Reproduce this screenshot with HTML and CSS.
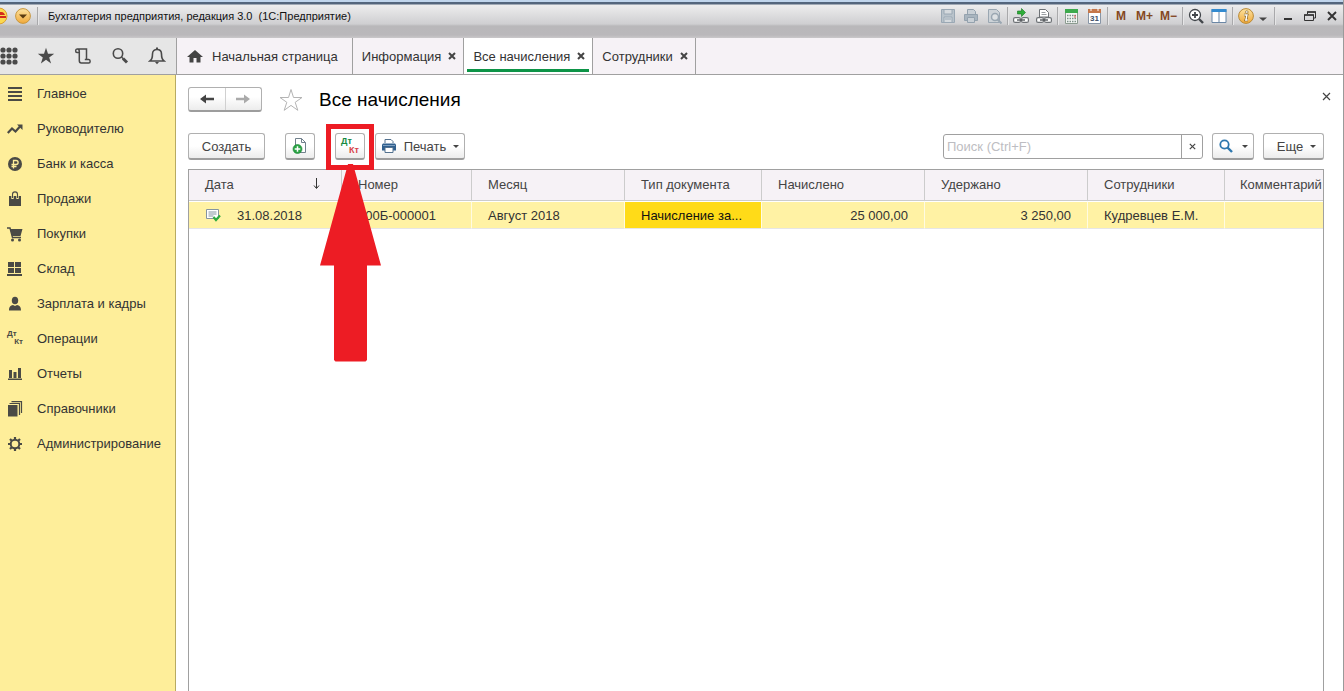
FILE: index.html
```html
<!DOCTYPE html>
<html lang="ru">
<head>
<meta charset="utf-8">
<title>Бухгалтерия предприятия, редакция 3.0</title>
<link rel="stylesheet" href="styles.css">
</head>
<body>
<div class="app">
  <header class="titlebar">
    <div class="titlebar-row">
      <svg class="logo" width="8" height="18" viewBox="0 0 8 18"><circle cx="-1" cy="9" r="8" fill="#fbd950" stroke="#d9a035"/><path d="M0 5h1.500c2 0 3 1.500 3.500 3H0z" fill="#d42a1c"/><path d="M0 10h6" stroke="#d42a1c" stroke-width="2"/></svg>
      <button class="plain menu-round" aria-label="Меню"><svg width="16" height="16" viewBox="0 0 16 16"><defs><linearGradient id="gold" x2="0" y2="1"><stop stop-color="#fde3a0"/><stop offset="1" stop-color="#f0a93a"/></linearGradient></defs><circle cx="8" cy="8" r="7.4" fill="url(#gold)" stroke="#c8973f"/><path d="M4 6.5h8L8 10.5z" fill="#5b3c10"/></svg></button>
      <i class="vline"></i>
      <span class="window-title">Бухгалтерия предприятия, редакция 3.0&nbsp; (1С:Предприятие)</span>
      <div class="tools">
        <button class="plain" aria-label="Сохранить"><svg width="16" height="16" viewBox="0 0 16 16" fill="none" stroke="#9aa8b4"><path d="M1.500 1.500h13v13h-13z" fill="#b9c3cb"/><path d="M4 2v4h8V2M4 14V9h8v5M5 11h6" fill="#d5dade"/></svg></button>
        <button class="plain" aria-label="Печать документа"><svg width="16" height="16" viewBox="0 0 16 16" fill="#c9d0d6" stroke="#94a2ae"><path d="M4.500 1.500h6l2 2v4h-8z"/><path d="M1.500 6.500h13v6h-13z" fill="#a9b5bf"/><path d="M4.500 9.500h7v5h-7z"/></svg></button>
        <button class="plain" aria-label="Просмотр"><svg width="16" height="16" viewBox="0 0 16 16" fill="none" stroke="#9aa7b2"><path d="M2.500 1.500h8l3 3v10h-11z" fill="#cdd3d8"/><circle cx="9" cy="9" r="3.500" fill="#dde1e4" stroke-width="1.500"/><path d="M11.500 11.500l4 4" stroke-width="2"/></svg></button>
        <i class="vline"></i>
        <button class="plain" aria-label="Перейти по ссылке"><svg width="16" height="16" viewBox="0 0 16 16"><path d="M4.500 3h4V.5l4 4-4 4V6h-4z" fill="#2fae3a" stroke="#16761f" stroke-width=".6"/><rect x=".6" y="9.600" width="6.800" height="4.800" rx="1.500" fill="#fff" stroke="#6e7276" stroke-width="1.200"/><rect x="8.600" y="9.600" width="6.800" height="4.800" rx="1.500" fill="#fff" stroke="#6e7276" stroke-width="1.200"/><path d="M4 12h8" stroke="#55595d" stroke-width="1.400"/></svg></button>
        <button class="plain" aria-label="Получить ссылку"><svg width="16" height="16" viewBox="0 0 16 16"><path d="M3.500 9V1.500h6l3 3V9z" fill="#fff" stroke="#6e7276"/><path d="M5.500 4.500h4M5.500 6.500h5" stroke="#9a9ea2"/><rect x=".6" y="9.600" width="6.800" height="4.800" rx="1.500" fill="#fff" stroke="#6e7276" stroke-width="1.200"/><rect x="8.600" y="9.600" width="6.800" height="4.800" rx="1.500" fill="#fff" stroke="#6e7276" stroke-width="1.200"/><path d="M4 12h8" stroke="#55595d" stroke-width="1.400"/></svg></button>
        <i class="vline"></i>
        <button class="plain" aria-label="Калькулятор"><svg width="16" height="16" viewBox="0 0 16 16"><path d="M2.500 1.500h12v14h-12z" fill="#f4f6f4" stroke="#8b9b8f"/><path d="M2 1h13v4H2z" fill="#3daa4d"/><path d="M4 7.500h9M4 10.500h9M4 13.500h9" stroke="#7c9088" stroke-width="1.500" stroke-dasharray="1.500 1"/><path d="M12 7v3" stroke="#d55"/></svg></button>
        <button class="plain cal" aria-label="Календарь"><svg width="16" height="16" viewBox="0 0 16 16"><path d="M2.500 1.500h12v14h-12z" fill="#fff" stroke="#8795a6"/><path d="M2 1h13v4H2z" fill="#c5774a"/><path d="M5 0v3M12 0v3" stroke="#fff"/><text x="8.500" y="13" text-anchor="middle" class="cal-day">31</text></svg></button>
        <i class="vline"></i>
        <button class="plain mem mem-one">M</button>
        <button class="plain mem">M+</button>
        <button class="plain mem">M−</button>
        <i class="vline"></i>
        <button class="plain" aria-label="Масштаб"><svg width="16" height="16" viewBox="0 0 16 16" fill="none" stroke="#42464b"><circle cx="7" cy="7" r="5.500" fill="#fff" stroke-width="1.300"/><path d="M4 7h6M7 4v6" stroke-width="1.800"/><path d="M11 11l4 4" stroke-width="2.400"/></svg></button>
        <button class="plain" aria-label="Панели"><svg width="16" height="16" viewBox="0 0 16 16"><path d="M1 1.500h14v13H1z" fill="#fff" stroke="#6b87a5"/><path d="M.5 1h15v3H.5z" fill="#338bd0"/><path d="M8 4v11" stroke="#6b87a5"/></svg></button>
        <i class="vline"></i>
        <button class="plain" aria-label="Справка"><svg width="16" height="16" viewBox="0 0 16 16"><circle cx="8" cy="8" r="7.400" fill="url(#gold)" stroke="#b98a38"/><circle cx="8.800" cy="4" r="1.300" fill="#fff" stroke="#7a5a20" stroke-width=".6"/><path d="M6 7h3l-1.200 5H10" fill="none" stroke="#7a5a20" stroke-width="2.600"/><path d="M6.300 7H9l-1.200 5h1.900" fill="none" stroke="#fff" stroke-width="1.400"/></svg></button>
        <button class="plain drop" aria-label="Ещё"><svg width="8" height="16" viewBox="0 0 8 16"><path d="M0 9.500h8L4 13z" fill="#444"/></svg></button>
        <i class="vline"></i>
        <button class="plain win" aria-label="Свернуть"><svg width="12" height="16" viewBox="0 0 12 16"><path d="M2 11h8" stroke="#333" stroke-width="2"/></svg></button>
        <button class="plain win" aria-label="Восстановить"><svg width="12" height="16" viewBox="0 0 12 16" fill="none" stroke="#333"><path d="M3.500 6V4h8v6h-2"/><path d="M.5 7h9v5.500h-9z"/><path d="M3 4h9M0 7h10" stroke-width="1.600"/></svg></button>
        <button class="plain win" aria-label="Закрыть окно"><svg width="12" height="16" viewBox="0 0 12 16"><path d="M2 4l8 8M10 4l-8 8" stroke="#333" stroke-width="1.900"/></svg></button>
      </div>
    </div>
  </header>

  <div class="topbar">
    <div class="quick">
      <button class="plain q-grid" aria-label="Разделы"><svg width="18" height="18" viewBox="0 0 18 18" fill="#4a4a4a"><circle cx="3" cy="3" r="2.600"/><circle cx="9" cy="3" r="2.600"/><circle cx="15" cy="3" r="2.600"/><circle cx="3" cy="9" r="2.600"/><circle cx="9" cy="9" r="2.600"/><circle cx="15" cy="9" r="2.600"/><circle cx="3" cy="15" r="2.600"/><circle cx="9" cy="15" r="2.600"/><circle cx="15" cy="15" r="2.600"/></svg></button>
      <button class="plain" aria-label="Избранное"><svg width="18" height="18" viewBox="0 0 18 18"><path d="M9 .8l2 6h6.200l-5 3.700 1.900 6L9 12.800l-5.100 3.700 1.900-6-5-3.700H7z" fill="#4a4a4a"/></svg></button>
      <button class="plain" aria-label="История"><svg width="18" height="18" viewBox="0 0 18 18" fill="none" stroke="#4a4a4a" stroke-width="1.500"><path d="M5 5.500H3C1.200 5.500 1.200 2 3 2h9.500v10.500M3.500 2C5 2 5.300 3 5.300 4.500v9c0 1.700.6 2.500 2 2.500h7.500c1.800 0 1.800-3.500 0-3.500h-4"/></svg></button>
      <button class="plain" aria-label="Поиск"><svg width="18" height="18" viewBox="0 0 18 18" fill="none" stroke="#4a4a4a"><circle cx="7" cy="6.500" r="4.700" stroke-width="1.600"/><path d="M10.500 10l2 2" stroke-width="1.500"/><path d="M12 11.500l4 4" stroke-width="3"/></svg></button>
      <button class="plain" aria-label="Уведомления"><svg width="18" height="18" viewBox="0 0 18 18"><path d="M2 14c2-1.500 2.500-3 2.500-7 0-3 2-4.500 4.500-4.500S13.500 4 13.500 7c0 4 .5 5.500 2.500 7z" fill="none" stroke="#4a4a4a" stroke-width="1.600"/><path d="M9 .5v2" stroke="#4a4a4a" stroke-width="2"/><path d="M7 15h4l-2 2.300z" fill="#4a4a4a"/></svg></button>
    </div>
    <nav class="tabs">
      <a class="tab tab-home" href="#"><svg width="16" height="14" viewBox="0 0 16 14"><path d="M8 1L0 8h2.500v5.500h4V9h3v4.500h4V8H16z" fill="#444"/></svg>Начальная страница</a>
      <a class="tab" href="#">Информация<svg class="x" width="8" height="8" viewBox="0 0 8 8"><path d="M1 1l6 6M7 1L1 7"/></svg></a>
      <a class="tab tab-active" href="#">Все начисления<svg class="x" width="8" height="8" viewBox="0 0 8 8"><path d="M1 1l6 6M7 1L1 7"/></svg></a>
      <a class="tab" href="#">Сотрудники<svg class="x" width="8" height="8" viewBox="0 0 8 8"><path d="M1 1l6 6M7 1L1 7"/></svg></a>
    </nav>
  </div>

  <div class="body">
    <nav class="sidebar">
      <a href="#"><svg width="16" height="16" viewBox="0 0 16 16"><path d="M1 2h14M1 6h14M1 10h14M1 14h14" stroke="#4a4a45" stroke-width="1.800"/></svg>Главное</a>
      <a href="#"><svg width="16" height="16" viewBox="0 0 16 16"><path d="M.8 12L5 7.500l3.500 3L13 5.500" fill="none" stroke="#4a4a45" stroke-width="2.200"/><path d="M10 3.500h5.500V9z" fill="#4a4a45"/></svg>Руководителю</a>
      <a href="#"><svg width="16" height="16" viewBox="0 0 16 16"><circle cx="8" cy="8" r="7" fill="#4a4a45"/><path d="M6.500 12.500v-8H9c2.800 0 2.800 4 0 4H4.500M4.500 10.500h5" fill="none" stroke="#feee9a" stroke-width="1.300"/></svg>Банк и касса</a>
      <a href="#"><svg width="16" height="16" viewBox="0 0 16 16"><path d="M2 5h12v10H2z" fill="#4a4a45"/><path d="M5.500 8V3.500c0-3.500 5-3.500 5 0V8" fill="none" stroke="#feee9a" stroke-width="2.400"/><path d="M5.500 7V3.500c0-3.500 5-3.500 5 0V7" fill="none" stroke="#4a4a45" stroke-width="1.100"/></svg>Продажи</a>
      <a href="#"><svg width="16" height="16" viewBox="0 0 16 16"><path d="M0 2h3l2.500 9.500H14" fill="none" stroke="#4a4a45" stroke-width="1.400"/><path d="M3 3h12.500L13.500 10H5z" fill="#4a4a45"/><circle cx="5.500" cy="14" r="1.500" fill="#4a4a45"/><circle cx="12.500" cy="14" r="1.500" fill="#4a4a45"/></svg>Покупки</a>
      <a href="#"><svg width="16" height="16" viewBox="0 0 16 16" fill="#4a4a45"><path d="M1 1h6v5H1zM8 1h6v5H8zM1 7h6v5H1zM8 7h6v5H8zM0 13h15v2H0z"/></svg>Склад</a>
      <a href="#"><svg width="16" height="16" viewBox="0 0 16 16" fill="#4a4a45"><ellipse cx="8" cy="4.500" rx="3.200" ry="3.800"/><path d="M2 14.500c0-4 1.500-5 4-5.500l2 1 2-1c2.500.5 4 1.500 4 5.500z"/></svg>Зарплата и кадры</a>
      <a href="#"><span class="dtkt"><b>Дт</b><b class="kt">Кт</b></span>Операции</a>
      <a href="#"><svg width="16" height="16" viewBox="0 0 16 16" fill="#4a4a45"><path d="M2 4h3v8H2zM6.500 6h3v6h-3zM11 2h3v10h-3zM1 12.500h14V14H1z"/></svg>Отчеты</a>
      <a href="#"><svg width="16" height="16" viewBox="0 0 16 16"><path d="M1 4h9.500v11.500H1z" fill="#4a4a45"/><path d="M2.500 2.500h10V14M4.500.700h10V12" fill="none" stroke="#4a4a45" stroke-width="1.200"/></svg>Справочники</a>
      <a href="#"><svg width="16" height="16" viewBox="0 0 16 16" fill="none" stroke="#4a4a45"><circle cx="8" cy="8" r="4.300" stroke-width="2"/><path d="M8 1v2.500M8 12.500V15M1 8h2.500M12.500 8H15M3 3l2 2M11 11l2 2M13 3l-2 2M5 11l-2 2" stroke-width="2.200"/></svg>Администрирование</a>
    </nav>

    <main class="content">
      <div class="heading">
        <div class="nav-pair">
          <button aria-label="Назад"><svg width="14" height="10" viewBox="0 0 14 10"><path d="M0 5l6-4.500V3.800h8v2.400H6v3.300z" fill="#444"/></svg></button>
          <button aria-label="Вперед"><svg width="14" height="10" viewBox="0 0 14 10"><path d="M14 5L8 .5v3.300H0v2.400h8v3.300z" fill="#aaa"/></svg></button>
        </div>
        <button class="plain star" aria-label="В избранное"><svg width="24" height="24" viewBox="0 0 24 24"><path d="M12 1.500l2.500 8H23l-6.800 4.800 2.600 8L12 17.400l-6.800 4.900 2.600-8L1 9.500h8.500z" fill="#fff" stroke="#b4b4b4"/></svg></button>
        <h1>Все начисления</h1>
        <button class="plain close-page" aria-label="Закрыть"><svg width="9" height="9" viewBox="0 0 9 9"><path d="M1 1l7 7M8 1L1 8" stroke="#444" stroke-width="1.200"/></svg></button>
      </div>

      <div class="toolbar">
        <button class="btn create">Создать</button>
        <button class="btn square" aria-label="Создать копированием"><svg width="16" height="18" viewBox="0 0 16 18"><path d="M3.500 1.500h6l4 4v10h-10z" fill="#fff" stroke="#71808c"/><path d="M9.500 1.500v4h4" fill="none" stroke="#71808c"/><circle cx="5.500" cy="12" r="4.500" fill="#2ba345" stroke="#198532" stroke-width=".6"/><path d="M2.700 12h5.600M5.500 9.200v5.600" stroke="#fff" stroke-width="1.500"/></svg></button>
        <div class="marked">
          <button class="btn square" aria-label="Дт Кт"><span class="dtkt big"><b class="dt">Дт</b><b class="kt">Кт</b></span></button>
          <i class="frame"></i>
          <svg class="arrow" width="62" height="198" viewBox="0 0 62 198"><path d="M28 0h5l28 101.500H47V196l-1.500 1.500h-30L14 196v-94.500H0z" fill="#ed1c24"/></svg>
        </div>
        <button class="btn print"><svg width="16" height="16" viewBox="0 0 16 16"><path d="M4 5V1.500h6l2 2V5" fill="#fff" stroke="#53718e"/><path d="M2 5.500h12l1 1v6H1v-6z" fill="#2f5f8e"/><path d="M2 7.500h12" stroke="#7fa0c0"/><path d="M4 9.500h8v5H4z" fill="#fff" stroke="#53718e"/></svg>Печать<i class="caret"></i></button>
        <div class="search">
          <input type="text" placeholder="Поиск (Ctrl+F)" aria-label="Поиск">
          <button class="clear" aria-label="Очистить"><svg width="7" height="7" viewBox="0 0 7 7"><path d="M.8.800l5.400 5.400M6.200.800L.8 6.200" stroke="#444" stroke-width="1.200"/></svg></button>
        </div>
        <button class="btn find" aria-label="Найти"><svg width="14" height="14" viewBox="0 0 14 14" fill="none" stroke="#2d77ae"><circle cx="5.500" cy="5.500" r="4.200" stroke-width="1.800"/><path d="M8.500 8.500l4.500 4.500" stroke-width="2.400"/></svg><i class="caret"></i></button>
        <button class="btn more">Еще<i class="caret"></i></button>
      </div>

      <div class="grid">
        <table>
          <colgroup><col class="c-date"><col class="c-num"><col class="c-month"><col class="c-type"><col class="c-sum"><col class="c-sum"><col class="c-type"><col></colgroup>
          <thead>
            <tr><th><div class="sort">Дата<svg width="7" height="12" viewBox="0 0 7 12"><path d="M3.500 0v10M1 7.500l2.500 3 2.500-3" fill="none" stroke="#333"/></svg></div></th><th>Номер</th><th>Месяц</th><th>Тип документа</th><th>Начислено</th><th>Удержано</th><th>Сотрудники</th><th>Комментарий</th></tr>
          </thead>
          <tbody>
            <tr><td><div class="doc"><svg width="16" height="14" viewBox="0 0 16 14"><path d="M1.500 1.500h12v9h-12z" fill="#fff" stroke="#8494a0"/><path d="M3.500 4h8M3.500 6h8M3.500 8h5" stroke="#8494a0"/><path d="M8.500 9l2.500 3L15 7.500" fill="none" stroke="#2eaa3f" stroke-width="2.200"/></svg>31.08.2018</div></td><td>000Б-000001</td><td>Август 2018</td><td class="selected">Начисление за...</td><td class="num">25 000,00</td><td class="num">3 250,00</td><td>Кудревцев Е.М.</td><td></td></tr>
          </tbody>
        </table>
      </div>
    </main>
  </div>
</div>
</body>
</html>
```
FILE: styles.css
```css
* { box-sizing: border-box; }
body {
  margin: 0;
  font-family: "Liberation Sans", Arial, sans-serif;
  font-size: 13px;
  color: #333;
  background: #fff;
}
a { color: inherit; text-decoration: none; }
button { font: inherit; color: inherit; padding: 0; margin: 0; }
svg { display: block; flex: none; }
.plain { border: 0; background: none; display: flex; align-items: center; justify-content: center; }

.app { min-height: 100vh; display: flex; flex-direction: column; border-right: 1px solid #9a9a9a; }

/* Window title */
.titlebar {
  height: 38px;
  border-top: 2px solid #c0d5ec;
  background: linear-gradient(#53657c 0 2px, #ededee 3px, #cfcfd1 22px, #b9b8ba 24px, #bab8bb 33px, #cac8ca 36px);
}
.titlebar-row { display: flex; align-items: center; height: 28px; padding-right: 4px; }
.logo { margin-right: 7px; }
.vline { width: 1px; height: 18px; background: #a9a9ab; box-shadow: 1px 0 #e6e6e7; }
.titlebar-row > .vline { margin: 0 10px 0 6px; }
.window-title { color: #111; font-size: 11px; white-space: nowrap; }
.tools { margin-left: auto; display: flex; align-items: center; gap: 7px; }
.tools .vline { margin: 0 -2px; }
.mem { color: #84481f; font-size: 12px; font-weight: bold; width: 17px; }
.mem-one { width: 16px; }
.cal-day { font-size: 8px; font-weight: bold; fill: #405068; }
.drop { width: 12px; margin-left: -4px; }
.win { width: 15px; }

/* Tabs */
.topbar { display: flex; height: 37px; background: #f6f2f6; border-bottom: 1px solid #a0a0a0; }
.quick { flex: none; width: 176px; background: #e6e6e6; display: flex; align-items: center; justify-content: space-between; padding-right: 10px; }
.tabs { display: flex; }
.tab { display: flex; align-items: center; padding: 0 7px 0 9px; gap: 7px; border-right: 1px solid #a0a0a0; position: relative; white-space: nowrap; }
.tab-home { border-left: 1px solid #a0a0a0; padding: 0 14px 0 10px; gap: 9px; }
.tab-active { background: #fff; }
.tab-active::after { content: ""; position: absolute; left: 3px; right: 3px; bottom: 2px; height: 3px; background: #0d9447; }
.x { stroke: #444; stroke-width: 2; }

/* Sections */
.body { flex: 1; display: flex; }
.sidebar { flex: none; width: 176px; background: #feee9a; border-right: 1px solid #b8ab62; padding-top: 1px; }
.sidebar a { display: flex; align-items: center; gap: 14px; height: 35px; padding-left: 7px; color: #333; }
.dtkt { width: 16px; height: 18px; display: flex; flex-direction: column; font-size: 8px; line-height: 8px; color: #4a4a45; text-align: left; }
.dtkt .kt { text-align: right; }
.big { font-size: 9px; line-height: 9px; width: 18px; }
.big .dt { color: #148a43; }
.big .kt { color: #d8434a; }

/* Page */
.content { flex: 1; min-width: 0; padding: 12px 19px 0 12px; display: flex; flex-direction: column; }
.heading { display: flex; align-items: center; height: 25px; }
.nav-pair { display: flex; width: 74px; height: 25px; border: 1px solid #b0b0b0; border-bottom: 2px solid #9d9d9d; border-radius: 3px; background: linear-gradient(#fff 40%, #ececec); }
.nav-pair button { flex: 1; border: 0; background: none; display: flex; align-items: center; justify-content: center; }
.nav-pair button + button { border-left: 1px solid #d0d0d0; }
.star { margin-left: 17px; }
h1 { margin: 0 0 0 16px; font-size: 19px; font-weight: normal; line-height: 24px; color: #000; white-space: nowrap; }
.close-page { margin: 0 -7px 6px auto; }

.toolbar { display: flex; align-items: center; height: 27px; margin: 21px 0 9px; }
.btn {
  flex: none; height: 27px; display: flex; align-items: center; justify-content: center;
  border: 1px solid #b0b0b0; border-bottom: 2px solid #9d9d9d; border-radius: 3px;
  background: linear-gradient(#fff 50%, #ececec); color: #444;
}
.create { width: 77px; }
.square { width: 30px; }
.create + .square { margin-left: 20px; }
.marked { position: relative; margin: 0 10px 0 20px; }
.frame { position: absolute; z-index: 1; left: -9px; top: -9px; width: 48px; height: 46px; border: 5px solid #ed1c24; }
.arrow { position: absolute; z-index: 1; left: -15px; top: 31px; }
.print { width: 90px; gap: 7px; }
.caret { border: 3px solid transparent; border-top-color: #444; border-bottom: 0; }
.search { display: flex; flex: 0 1 260px; height: 25px; margin: 0 9px 0 auto; border: 1px solid #a0a0a0; border-radius: 3px; }
.search input { flex: 1; min-width: 0; border: 0; padding: 0 3px; background: none; font: inherit; color: #333; outline: 0; }
.search input::placeholder { color: #bdbdc2; opacity: 1; }
.clear { width: 21px; border: 0; border-left: 1px solid #a0a0a0; background: none; display: flex; align-items: center; justify-content: center; }
.find { width: 42px; gap: 9px; margin-right: 9px; }
.more { width: 61px; gap: 7px; padding-left: 6px; }

/* List of documents */
.grid { flex: 1; border: 1px solid #a0a0a0; border-bottom: 0; overflow: hidden; }
table { width: 100%; table-layout: fixed; border-collapse: separate; border-spacing: 0; }
.c-date { width: 153px; }
.c-num { width: 130px; }
.c-month { width: 153px; }
.c-type { width: 137px; }
.c-sum { width: 163px; }
th, td { padding: 0 0 0 16px; text-align: left; font-weight: normal; white-space: nowrap; overflow: hidden; }
th { height: 31px; padding-bottom: 2px; color: #444; background: #f6f2f6; border-right: 1px solid #ccc; border-bottom: 1px solid #ccc; }
th:last-child { padding-left: 15px; }
td { height: 28px; background: #fff2a4; border-right: 1px solid #fffbe2; border-top: 1px solid #fff; border-bottom: 1px solid #e6e6e6; }
th:last-child, td:last-child { border-right: 0; }
td.selected { background: #ffdb18; color: #111; }
td.num { text-align: right; padding: 0 16px 0 0; }
.sort { display: flex; justify-content: space-between; align-items: center; padding-right: 21px; }
.doc { display: flex; align-items: center; gap: 16px; }
```
